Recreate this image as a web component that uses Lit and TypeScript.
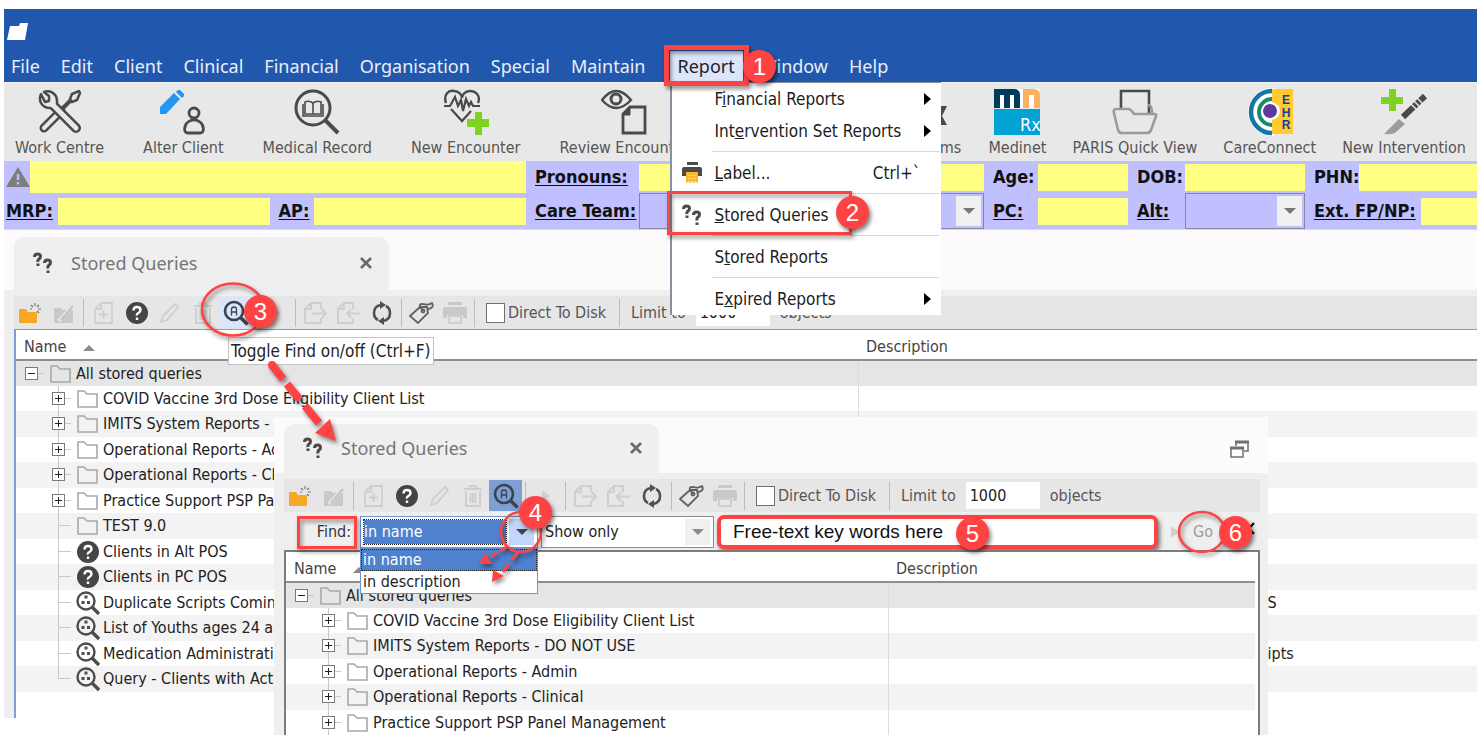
import { LitElement, html, css, svg, nothing, TemplateResult } from "lit";
import { customElement, property } from "lit/decorators.js";
import { classMap } from "lit/directives/class-map.js";

const INK = "#4a4a4a";
const PALE = "#cfcfcf";
const RED = "#ff4343";

const icons: Record<string, TemplateResult> = {
  app: html`<svg width="22" height="20" viewBox="0 0 22 20"><path d="M3 4h9l1-3h8l-3 17H0z" fill="#fff"/></svg>`,
  tools: html`<svg width="44" height="44" viewBox="0 0 44 44" fill="none" stroke-linecap="round">
    <path d="M6 38 23 21" stroke="${INK}" stroke-width="9"/><path d="M6 38 23 21" stroke="#e8e8e8" stroke-width="4"/>
    <path d="M22 21 34 9" stroke="${INK}" stroke-width="4"/><path d="M32 9l2-5 7-3 1 2-3 7-5 2z" stroke="${INK}" stroke-width="2.5" fill="#e8e8e8"/>
    <path d="M14 14 38 38" stroke="${INK}" stroke-width="10"/>
    <path d="M3 4c-3 7 1 14 9 14l4 0 3-3V10C18 3 12 0 6 2l5 4v5l-4 1z" stroke="${INK}" stroke-width="2.5" fill="#e8e8e8" stroke-linejoin="round"/>
    <path d="M14 14 38 38" stroke="#e8e8e8" stroke-width="5"/></svg>`,
  alter: html`<svg width="46" height="46" viewBox="0 0 46 46" fill="none">
    <path d="M0 25v-7L14 4l6 6L6 25z M16 3l2-2h2l4 4v2l-2 2z" fill="#2196f3"/>
    <circle cx="34" cy="24" r="5" stroke="${INK}" stroke-width="2.8"/><path d="M28 44c-5 0-4-8 0-11 4-3 8-3 12 0 4 3 5 11 0 11z" stroke="${INK}" stroke-width="2.8"/></svg>`,
  record: html`<svg width="46" height="46" viewBox="0 0 46 46" fill="none" stroke="${INK}">
    <circle cx="19" cy="19" r="17" stroke-width="3"/><path d="M31 31 44 44" stroke-width="4"/>
    <path d="M19 14q-4-3-8-1v12h8V14q4-3 8-1v12h-8M9 15v12h20V15" stroke-width="1.6"/></svg>`,
  encounter: html`<svg width="46" height="46" viewBox="0 0 46 46" fill="none" stroke="${INK}" stroke-width="2.4">
    <path d="M3 14C0 5 6 1 11 2c5 0 8 4 8 7 0-3 3-7 8-7 6 0 11 5 8 12"/><path d="M1 17h6l5-9 3 9 3-6 2 11 3-12 3 7 2-4 2 4h7M8 20l11 12 9-10" stroke-width="2.2"/>
    <path d="M24 30h8v-7h7v7h7v8h-7v8h-7v-8h-8z" fill="#7ed321" stroke="none"/></svg>`,
  review: html`<svg width="46" height="46" viewBox="0 0 46 46" fill="none" stroke="${INK}">
    <path d="M1 11Q15-7 30 11 15 27 1 11z" stroke-width="2.4"/><circle cx="15" cy="10" r="5" stroke-width="3"/>
    <path d="M29 18h15v26H22V25z" stroke-width="2.8"/><path d="M29 18v8h-7z" fill="${INK}" stroke-width="1"/></svg>`,
  forms: html`<svg width="46" height="46" viewBox="0 0 46 46"><path d="M14 17h17l-5 10 5 9H14z" fill="${INK}"/></svg>`,
  medinet: html`<svg width="46" height="46" viewBox="0 0 46 46">
    <rect width="46" height="19" fill="#fff"/><path d="M0 19V0h20q6 0 6 6v13h-6V6h-4v13h-6V6H6v13z" fill="#003b5c"/>
    <path d="M29 19V0h10q7 0 7 6v13h-6V6h-5v13z" fill="#fbb161"/><rect y="20" width="46" height="26" fill="#00a3d3"/>
    <text x="26" y="42" fill="#fff" font-family="DejaVu Sans Condensed" font-size="18">Rx</text></svg>`,
  quick: html`<svg width="46" height="46" viewBox="0 0 46 46" fill="none" stroke-width="2.6">
    <path d="M9 20V2h28v24" stroke="${INK}"/><path d="M8 20H4q-3 0-2 4l4 17q1 3 4 3h25q3 0 4-3l5-14q1-2-2-2H22q-3-5-6-5H8M36 16q4 0 4 8" stroke="#9a9a9a"/></svg>`,
  care: html`<svg width="48" height="48" viewBox="0 0 48 48" fill="none">
    <path d="M26 0A24 24 0 0 0 26 48L28 48V0z" fill="#fff"/><path d="M26 3A21 21 0 0 0 26 45" stroke="#1577a8" stroke-width="4.5"/>
    <path d="M26 11A13 13 0 0 0 26 37" stroke="#1a8a72" stroke-width="4"/><rect x="26" y="1" width="21" height="45" fill="#ffcb2e"/><circle cx="25" cy="23" r="9" fill="#fff"/><circle cx="24" cy="23" r="7" fill="#5b3a99"/>
    <g fill="#1a3a94" font-family="Liberation Sans" font-weight="700" font-size="12" text-anchor="middle"><text x="40" y="16">E</text><text x="40" y="29">H</text><text x="40" y="41">R</text></g></svg>`,
  knife: html`<svg width="48" height="46" viewBox="0 0 48 46" fill="none">
    <path d="M1 8h8V0h7v8h7v7h-7v7H9v-7H1z" fill="#7ed321"/><path d="M23 28 45 7" stroke="${INK}" stroke-width="6"/><path d="M31 15l6 6M34 12l6 6M37 9l6 6" stroke="#e8e8e8" stroke-width="1.5"/>
    <path d="M4 45Q10 39 19 30l6 5-9 8q-3 3-12 2z" fill="#9c9c9c"/></svg>`,
  warn: html`<svg width="24" height="20" viewBox="0 0 24 20"><path d="M12 0 24 20H0z" fill="#7d7d7d"/><path d="M12 7v6M12 15v2.5" stroke="#c0c0ff" stroke-width="2.4"/></svg>`,
  qq: html`<svg width="20" height="22" viewBox="0 0 20 22" fill="none" stroke="${INK}" stroke-width="3"><path d="M1.500 5q0-3 3-3t3 2.500q0 1.500-1.500 2.500T5 10M5 11.500V14"/><path d="M11.500 11q0-3 3-3t3 2.500q0 1.500-1.500 2.500T15 16.500M15 18.500V21"/></svg>`,
  print: html`<svg width="20" height="22" viewBox="0 0 20 22"><path d="M5 0h11v3H5z" fill="${INK}"/><path d="M0 7q0-2 2-2h16q2 0 2 2v7H0z" fill="${INK}"/><path d="M4 10h12v11l-2-1-2 1-2-1-2 1-2-1-2 1z" fill="#fbb829"/><path d="M7 13v7M10 13v7M13 13v7" stroke="#fff" stroke-dasharray="1 2"/></svg>`,
  close: html`<svg width="14" height="14" viewBox="0 0 14 14"><path d="M2 2l10 10M12 2 2 12" stroke="#6a6a6a" stroke-width="2.6"/></svg>`,
  restore: html`<svg width="20" height="18" viewBox="0 0 20 18" fill="none" stroke="#707070"><path d="M6 6V2h12v9h-4" stroke-width="1.5"/><path d="M5 2h14" stroke-width="3"/><path d="M1 8h12v9H1z" stroke-width="1.500"/><path d="M0 8h14" stroke-width="3"/></svg>`,
  newFolder: html`<svg width="24" height="22" viewBox="0 0 24 22"><path d="M0 7h7l2 3h9v11H0z" fill="#f9a825"/><path d="M16 1v3M12 3l2 2M20 3l-2 2M11 7h2M19 7h3M20 11l-2-2" stroke="#777" stroke-width="1.2"/></svg>`,
  editFolder: html`<svg width="22" height="22" viewBox="0 0 22 22"><path d="M1 6h7l2 2h10v13H1z" fill="#c9c9c9"/><path d="M6 19 18 6" stroke="#e6e6e6" stroke-width="4"/><path d="M8 18 20 4" stroke="#c2c2c2" stroke-width="2"/></svg>`,
  addDoc: html`<svg width="20" height="22" viewBox="0 0 20 22" fill="none" stroke="${PALE}" stroke-width="1.8"><path d="M7 1h11v20H1V7zM7 1v6H1M9.500 8v9M5 12.500h9"/></svg>`,
  help: html`<svg width="22" height="22" viewBox="0 0 22 22"><circle cx="11" cy="11" r="11" fill="#454545"/><path d="M7.500 8.500q0-3.500 3.500-3.500t3.500 3q0 2-2 3T11 13.500M11 15.500V18" fill="none" stroke="#fff" stroke-width="2.400"/></svg>`,
  pencil: html`<svg width="20" height="22" viewBox="0 0 20 22" fill="none" stroke="${PALE}" stroke-width="1.8"><path d="M1 20l2-6L15 2l3 3L7 18z"/></svg>`,
  trash: html`<svg width="20" height="22" viewBox="0 0 20 22" fill="none" stroke="${PALE}" stroke-width="2"><path d="M1 4h18M7 4V1h6v3M3 6v15h14V6M7.500 8v10M10 8v10M12.500 8v10"/></svg>`,
  find: html`<svg width="26" height="26" viewBox="0 0 26 26" fill="none" stroke="#3c4350"><circle cx="11" cy="11" r="9" stroke-width="2.600"/><path d="M17.500 17.500l7 7" stroke-width="3.600"/><path d="M8.500 15.500V9.500q0-2.500 2.500-2.500t2.500 2.500v6M8.500 12h5" stroke-width="1.300"/></svg>`,
  run: html`<svg width="12" height="14" viewBox="0 0 12 14"><path d="M2 1l8 6-8 6z" fill="#d0d0d0"/></svg>`,
  exportDoc: html`<svg width="24" height="22" viewBox="0 0 24 22" fill="none" stroke="${PALE}" stroke-width="2"><path d="M17 7V1H7L1 7v14h16v-5M7 1v6H1M8 11.500h13M18 7l4 4.500-4 4.500"/></svg>`,
  importDoc: html`<svg width="24" height="22" viewBox="0 0 24 22" fill="none" stroke="${PALE}" stroke-width="2"><path d="M16 7V1H7L1 7v14h15v-5M7 1v6H1M10 11.500h13M14 7l-4 4.500 4 4.500"/></svg>`,
  refresh: html`<svg width="20" height="24" viewBox="0 0 20 24" fill="none" stroke="#505050" stroke-width="2.600"><path d="M6 19Q2 17 2 12q0-7 7-8M14 5q4 2 4 7 0 7-7 8"/><path d="M8 0l6 4-6 4zM12 16l-6 4 6 4z" fill="#505050" stroke="none"/></svg>`,
  tag: html`<svg width="26" height="22" viewBox="0 0 26 22" fill="none" stroke="#606060" stroke-width="1.800"><path d="M1 14 11 5h7l1 6L9 21z"/><circle cx="14" cy="9" r="1.500"/><path d="M14 9Q8 2 13 2c4 0 6 2 10-1 2 3 0 6-5 6"/></svg>`,
  printPale: html`<svg width="24" height="22" viewBox="0 0 24 22"><path d="M5 0h14v3H5zM2 5h20q2 0 2 2v9h-4v-3H4v3H0V7q0-2 2-2z" fill="#c9c9c9"/><path d="M6 14h12v7H6z" fill="#e6e6e6" stroke="#cfcfcf" stroke-width="2"/></svg>`,
  folder: html`<svg width="21" height="18" viewBox="0 0 21 18"><path d="M1 1h6l3 3h10v13H1z" fill="none" stroke="#a8a8a8" stroke-width="1.600"/></svg>`,
  query: html`<svg width="24" height="24" viewBox="0 0 24 24" fill="none" stroke="#4c4c4c"><circle cx="10" cy="10" r="8.500" stroke-width="2.400"/><path d="M16 16l7 7" stroke-width="3.400"/><path d="M8.500 4.500h3v3h-3zM5.500 10h3v3h-3zM11 10h3v3h-3z" fill="#4c4c4c" stroke="none"/></svg>`,
  down: html`<svg width="12" height="6" viewBox="0 0 12 6"><path d="M0 0h12L6 6z" fill="currentColor"/></svg>`,
  up: html`<svg width="12" height="6" viewBox="0 0 12 6"><path d="M0 6h12L6 0z" fill="#8a8a8a"/></svg>`,
  sub: html`<svg width="8" height="12" viewBox="0 0 8 12"><path d="M0 0l7 6-7 6z" fill="#000"/></svg>`,
};

interface Row { icon: string; name: string; desc?: string; sign?: "+" | "-"; root?: boolean; }

const folders: Row[] = [
  { icon: "folder", name: "All stored queries", sign: "-", root: true },
  { icon: "folder", name: "COVID Vaccine 3rd Dose Eligibility Client List", sign: "+" },
  { icon: "folder", name: "IMITS System Reports - DO NOT USE", sign: "+" },
  { icon: "folder", name: "Operational Reports - Admin", sign: "+" },
  { icon: "folder", name: "Operational Reports - Clinical", sign: "+" },
  { icon: "folder", name: "Practice Support PSP Panel Management", sign: "+" },
];
const allRows: Row[] = [
  ...folders,
  { icon: "folder", name: "TEST 9.0" },
  { icon: "help", name: "Clients in Alt POS" },
  { icon: "help", name: "Clients in PC POS" },
  { icon: "query", name: "Duplicate Scripts Coming", desc: "S" },
  { icon: "query", name: "List of Youths ages 24 a" },
  { icon: "query", name: "Medication Administratio", desc: "ipts" },
  { icon: "query", name: "Query - Clients with Acti" },
];

const base = css`
  * { box-sizing: border-box; }
  button { font: inherit; color: inherit; background: none; border: 0; padding: 0; margin: 0; }
  input, select { font: inherit; color: inherit; margin: 0; border-radius: 0; }
  svg { display: block; flex: none; }
`;

@customElement("query-pane")
export class QueryPane extends LitElement {
  @property({ attribute: false }) rows: Row[] = [];
  @property({ type: Boolean, reflect: true }) find = false;

  static styles = [base, css`
    :host { display: flex; flex-direction: column; background: #efefef; color: #222; font: 16px/24px "DejaVu Sans Condensed", "DejaVu Sans", sans-serif; }
    .tabs { display: flex; justify-content: space-between; align-items: center; height: 60px; padding: 7px 18px 0 10px; background: #fcfafb; }
    .tab { display: flex; align-items: center; align-self: stretch; width: 375px; padding: 0 16px 2px 19px; background: #efefef; border-radius: 10px 10px 0 0; }
    .title { flex: 1; padding-left: 18px; font: 18px/24px "Noto Sans", sans-serif; color: #757575; }
    .body { display: flex; flex-direction: column; flex: 1; padding: 6px 0 0 10px; }
    :host([find]) .body { padding-right: 8px; }
    .bar { display: flex; align-items: center; height: 33px; background: #e6e6e6; color: #555; }
    .tool { display: flex; align-items: center; justify-content: center; width: 33px; height: 31px; }
    .tool.hot { background: #dbe6fc; }
    :host([find]) .tool.hot { background: #7e9fd3; }
    .sep { width: 1px; height: 28px; margin: 0 3px; background: #bcbcbc; }
    .disk { display: flex; align-items: center; gap: 3px; margin: 0 10px 0 8px; }
    .disk input { appearance: none; width: 19px; height: 20px; background: #fff; border: 1px solid #707070; }
    .limit { display: flex; align-items: center; gap: 10px; margin-left: 8px; }
    .limit input { width: 74px; height: 27px; padding: 0 4px; border: 0; background: #fff; color: #222; }
    .findbar { display: flex; align-items: center; height: 38px; gap: 3px; padding-top: 2px; }
    .findbar label { width: 73px; padding-right: 6px; text-align: right; color: #333; }
    .combo { display: flex; align-items: center; position: relative; height: 32px; padding: 3px; border: 1px solid #8c8c8c; background: #fff; }
    .combo select { appearance: none; flex: 1; min-width: 0; height: 24px; padding: 0; border: 0; background: transparent; outline: 0; }
    .combo .arrow { display: flex; align-items: center; justify-content: center; width: 25px; height: 26px; background: #f0f0f0; color: #8a8a8a; }
    .field { width: 178px; border-color: #6f93cf; }
    .combo.field select { background: #4f81cf; color: #fff; outline: 1px dotted #222; }
    .field .arrow { background: #c3d5fa; color: #444; margin-left: 3px; }
    .mode { width: 173px; }
    .words { flex: 1; min-width: 0; height: 34px; padding: 0 12px; border: 4px solid #ff4343; border-radius: 7px; background: #fff; box-shadow: 2px 3px 4px rgba(0, 0, 0, .5); font-family: "Liberation Sans", Arial, sans-serif; font-size: 19px; color: #111; }
    .list { position: absolute; z-index: 2; top: 31px; left: -1px; width: 178px; margin: 0; padding: 0; list-style: none; background: #fff; border: 1px solid #6f93cf; line-height: 22px; }
    .list li { padding: 0 2px; }
    .list .on { background: #4f81cf; color: #fff; outline: 1px dotted #222; outline-offset: -1px; }
    .go { width: 99px; display: flex; align-items: center; gap: 12px; padding-left: 8px; color: #9a9a9a; }
    .go .shut { margin-left: auto; padding: 0 4px 8px 0; }
    .frame { flex: 1; border-left: 2px solid #7d9fd4; border-top: 1px solid #7d9fd4; background: #fff; }
    :host([find]) .frame { border: solid #7c7c7c; border-width: 2px 2px 0; padding-right: 3px; }
    table { width: 100%; border-collapse: collapse; table-layout: fixed; }
    th { height: 30px; padding: 5px 0 0 8px; text-align: left; font-weight: 400; color: #444; border-bottom: 2px solid #8e8e8e; }
    th .up { display: inline-block; vertical-align: middle; margin-left: 12px; }
    th:first-child { width: 842px; }
    :host([find]) th:first-child { width: 602px; }
    td { height: 26px; padding: 0; border-left: 1px solid #dcdcdc; white-space: nowrap; overflow: hidden; }
    td:first-child { border: 0; }
    tr:nth-child(even) td { height: 25px; }
    tr:nth-child(odd) td { background: #f3f3f3; }
    tr:first-child td { background: #e5e5e5; }
    .node { display: flex; align-items: center; height: 25px; padding-left: 35px; }
    .node.root { padding-left: 8px; }
    .branch { overflow: visible; }
    .glyph { display: flex; align-items: center; justify-content: center; width: 21px; height: 25px; margin-right: 5px; }
    .tail { padding-left: 409px; }
  `];

  private branch(r: Row, last: boolean) {
    return html`<svg class="branch" width="26" height="26" viewBox="0 0 26 26" fill="none" stroke="#c8c8c8">
      ${r.root ? nothing : svg`<path d="M7.500 -1V${last ? 13 : 27}"/>`}
      <path d="M${r.sign ? 14 : 8} 12.500H20"/>
      ${r.sign ? svg`<rect x="1.500" y="6.500" width="12" height="12" fill="#fff" stroke="#7a7a7a"/><path d="M4 12.500h7" stroke="#222"/>` : nothing}
      ${r.sign === "+" ? svg`<path d="M7.500 9v7" stroke="#222"/>` : nothing}
    </svg>`;
  }

  private tool(icon: string, label: string, hot = false) {
    return html`<button class=${classMap({ tool: true, hot })} aria-label=${label}>${icons[icon]}</button>`;
  }

  render() {
    const sep = html`<span class="sep"></span>`;
    return html`
      <div class="tabs">
        <div class="tab">${icons.qq}<span class="title">Stored Queries</span><button aria-label="Close tab">${icons.close}</button></div>
        ${this.find ? html`<button aria-label="Restore">${icons.restore}</button>` : nothing}
      </div>
      <div class="body">
        <div class="bar">
          ${this.tool("newFolder", "New folder")}${this.tool("editFolder", "Edit folder")}${sep}
          ${this.tool("addDoc", "New query")}${this.tool("help", "Help")}${this.tool("pencil", "Edit")}${this.tool("trash", "Delete")}${this.tool("find", "Find", true)}${sep}
          ${this.tool("run", "Run")}${sep}
          ${this.tool("exportDoc", "Export")}${this.tool("importDoc", "Import")}${this.tool("refresh", "Refresh")}${sep}
          ${this.tool("tag", "Label")}${this.tool("printPale", "Print")}${sep}
          <label class="disk"><input type="checkbox" />Direct To Disk</label>${sep}
          <label class="limit">Limit to <input type="text" .value=${"1000"} /><span>objects</span></label>
        </div>
        ${this.find ? html`<div class="findbar">
          <label for="field">Find:</label>
          <div class="combo field">
            <select id="field"><option>in name</option><option>in description</option></select><span class="arrow">${icons.down}</span>
            <ul class="list" role="listbox"><li class="on" role="option" aria-selected="true">in name</li><li role="option">in description</li></ul>
          </div>
          <div class="combo mode"><select aria-label="Mode"><option>Show only</option></select><span class="arrow">${icons.down}</span></div>
          <input class="words" type="text" aria-label="Key words" .value=${"Free-text key words here"} />
          <div class="go">${icons.run}<button>Go</button><button class="shut" aria-label="Close find"><svg width="13" height="13" viewBox="0 0 13 13"><path d="M1 1l10 11M11 1 1 12" stroke="#111" stroke-width="2.400"/></svg></button></div>
        </div>` : nothing}
        <div class="frame">
          <table>
            <thead><tr><th>Name <span class="up">${icons.up}</span></th><th>Description</th></tr></thead>
            <tbody>${this.rows.map((r, i) => html`<tr>
              <td><div class=${classMap({ node: true, root: !!r.root })}>${this.branch(r, i === allRows.length - 1)}<span class="glyph">${icons[r.icon]}</span>${r.name}</div></td>
              <td class=${classMap({ tail: !!r.desc })}>${r.desc ?? ""}</td></tr>`)}</tbody>
          </table>
        </div>
      </div>`;
  }
}

@customElement("app-root")
export class AppRoot extends LitElement {
  static styles = [base, css`
    :host { display: block; position: relative; height: 100vh; min-height: 735px; overflow: hidden; padding: 9px 5px 17px 4px; background: #fff; font: 16px/24px "DejaVu Sans Condensed", "DejaVu Sans", sans-serif; box-sizing: border-box; }
    .app { display: flex; flex-direction: column; height: 100%; }
    .head { background: #2158ad; color: #e9effa; }
    .titlebar { height: 42px; padding: 13px 3px; }
    .menubar { display: flex; gap: 21px; height: 31px; padding-left: 7px; font: 18px/31px "Noto Sans", sans-serif; }
    .menubar .open { position: relative; margin: 0 -4px 0 3px; background: #dbe6fa; color: #222; }
    .menubar .open > button { padding: 0 8px; }
    .menu { position: absolute; z-index: 5; top: 31px; left: 0; width: 271px; background: #fff; border: solid #8a8f9c; border-width: 1px 0 0 2px; color: #1c1c1c; font: 17px/32px "DejaVu Sans Condensed", sans-serif; }
    .menu button { display: flex; align-items: center; width: 100%; height: 32px; padding-right: 9px; text-align: left; }
    .menu .pic { width: 43px; padding-left: 10px; }
    .menu .lab { flex: 1; white-space: nowrap; }
    .menu .key { padding-right: 11px; }
    .menu hr { height: 1px; margin: 4px 2px 5px 40px; border: 0; background: #d5d9de; }
    .toolbar { display: flex; justify-content: space-between; height: 79px; padding: 5px 11px 0 11px; background: #e8e8e8; color: #555; border-top: 1px solid #f4f4f4; }
    .group { display: flex; gap: 39px; }
    .group + .group { gap: 26px; }
    .big { display: flex; flex-direction: column; align-items: center; gap: 1px; white-space: nowrap; }
    .big span { display: flex; height: 47px; align-items: center; }
    .client { display: grid; grid-template-columns: minmax(0, 522fr) 113px minmax(0, 345fr) 54px minmax(0, 90fr) 57px minmax(0, 120fr) 172px; grid-template-rows: 32px 36px; height: 69px; background: #c0c0ff; font: bold 18px/24px "DejaVu Sans Condensed", sans-serif; color: #111; border-bottom: 1px solid #d9d9ee; }
    .client > * { display: flex; align-items: center; }
    .client a { color: inherit; text-underline-offset: 2px; }
    .start { padding-left: 2px; }
    .lab9 { padding-left: 9px; }
    .y { height: 27px; background: #ffff82; flex: 1; }
    .y.tall { height: 32px; }
    .gap { margin-left: 5px; }
    .pick { align-self: stretch; border: 1px solid #85859c; padding: 2px; }
    .pick select { appearance: none; flex: 1; min-width: 0; height: 30px; background: transparent; border: 0; }
    .pick span { display: flex; align-items: center; justify-content: center; width: 25px; height: 30px; background: #f0f0f0; color: #777; }
    query-pane.main { flex: 1; min-height: 0; }
    query-pane.float { position: absolute; z-index: 2; left: 274px; top: 417px; width: 994px; height: 318px; overflow: hidden; }
    .tip { position: absolute; z-index: 3; left: 228px; top: 337px; padding: 1px 2px; border: 1px solid #c4c4c4; background: #fff; font-size: 17px; color: #222; }
    .marks { position: absolute; z-index: 6; inset: 0; pointer-events: none; filter: drop-shadow(2px 3px 2px rgba(0, 0, 0, .45)); }
    .badge { position: absolute; z-index: 7; display: grid; place-items: center; width: 33px; height: 33px; border-radius: 50%; background: #ff4343; color: #fff; font: 24px/33px "Liberation Sans", Arial, sans-serif; box-shadow: 2px 3px 4px rgba(0, 0, 0, .5); }
    .b1 { left: 743px; top: 50px; } .b2 { left: 836px; top: 196px; } .b3 { left: 244px; top: 295px; }
    .b4 { left: 519px; top: 496px; } .b5 { left: 956px; top: 517px; } .b6 { left: 1219px; top: 516px; }
  `];

  private plain(names: string[]) {
    return names.map((n) => html`<div><button>${n}</button></div>`);
  }
  private item(text: TemplateResult, pic: unknown = nothing, end: unknown = nothing) {
    return html`<button role="menuitem"><span class="pic">${pic}</span><span class="lab">${text}</span>${end}</button>`;
  }
  private big(icon: string, label: string) {
    return html`<button class="big"><span>${icons[icon]}</span>${label}</button>`;
  }

  render() {
    return html`
      <div class="app">
        <header class="head">
          <div class="titlebar">${icons.app}</div>
          <nav class="menubar">
            ${this.plain(["File", "Edit", "Client", "Clinical", "Financial", "Organisation", "Special", "Maintain"])}
            <div class="open"><button>Report</button>
              <div class="menu" role="menu">
                ${this.item(html`F<u>i</u>nancial Reports`, nothing, icons.sub)}
                ${this.item(html`Int<u>e</u>rvention Set Reports`, nothing, icons.sub)}<hr />
                ${this.item(html`<u>L</u>abel...`, icons.print, html`<span class="key">Ctrl+\`</span>`)}<hr />
                ${this.item(html`<u>S</u>tored Queries`, icons.qq)}<hr />
                ${this.item(html`S<u>t</u>ored Reports`)}<hr />
                ${this.item(html`E<u>x</u>pired Reports`, nothing, icons.sub)}
              </div>
            </div>
            ${this.plain(["Window", "Help"])}
          </nav>
        </header>
        <div class="toolbar">
          <div class="group">${this.big("tools", "Work Centre")}${this.big("alter", "Alter Client")}${this.big("record", "Medical Record")}${this.big("encounter", "New Encounter")}${this.big("review", "Review Encounter")}</div>
          <div class="group">${this.big("forms", "Forms")}${this.big("medinet", "Medinet")}${this.big("quick", "PARIS Quick View")}${this.big("care", "CareConnect")}${this.big("knife", "New Intervention")}</div>
        </div>
        <section class="client">
          <div class="start">${icons.warn}<span class="y tall"></span></div>
          <div class="lab9"><a href="#">Pronouns:</a></div><div><span class="y"></span></div>
          <div class="lab9">Age:</div><div><span class="y"></span></div>
          <div class="lab9">DOB:</div><div><span class="y"></span></div>
          <div class="lab9">PHN:<span class="y"></span></div>
          <div class="start"><a href="#">MRP:</a><span class="y gap"></span><a class="lab9" href="#">AP:</a><span class="y gap"></span></div>
          <div class="lab9"><a href="#">Care Team:</a></div><div class="pick"><select aria-label="Care Team"></select><span>${icons.down}</span></div>
          <div class="lab9"><a href="#">PC:</a></div><div><span class="y"></span></div>
          <div class="lab9"><a href="#">Alt:</a></div><div class="pick"><select aria-label="Alt"></select><span>${icons.down}</span></div>
          <div class="lab9"><a href="#">Ext. FP/NP:</a><span class="y gap"></span></div>
        </section>
        <query-pane class="main" .rows=${allRows}></query-pane>
      </div>
      <query-pane class="float" find .rows=${folders}></query-pane>
      <div class="tip" role="tooltip">Toggle Find on/off (Ctrl+F)</div>
      <svg class="marks" width="1482" height="735" viewBox="0 0 1482 735" fill="none" stroke="${RED}">
        <rect x="666.500" y="47.500" width="80" height="36" stroke-width="5"/>
        <rect x="668.500" y="192.500" width="182" height="41" stroke-width="3"/>
        <rect x="298.500" y="517.500" width="57" height="30" stroke-width="3"/>
        <ellipse cx="233" cy="309.500" rx="31" ry="26" stroke-width="2.600"/>
        <circle cx="521" cy="532" r="20" stroke-width="2.600"/>
        <ellipse cx="1202" cy="532" rx="23" ry="20" stroke-width="2.600"/>
        <circle cx="272" cy="365" r="4" fill="${RED}" stroke="none"/>
        <path d="M272 365l11 14M287 384l13 16M305 406l14 17" stroke-width="8"/>
        <path d="M315 433l15-14 6 22z" fill="${RED}" stroke="none"/>
        <path d="M507 547l-7 4M497 553l-6 4M518 552l-6 8M509 564l-6 8" stroke-width="3"/>
        <path d="M479 564l6-11 7 11zM492 582l1-12 11 6z" fill="${RED}" stroke="none"/>
      </svg>
      ${[1, 2, 3, 4, 5, 6].map((n) => html`<span class="badge b${n}">${n}</span>`)}
    `;
  }
}
